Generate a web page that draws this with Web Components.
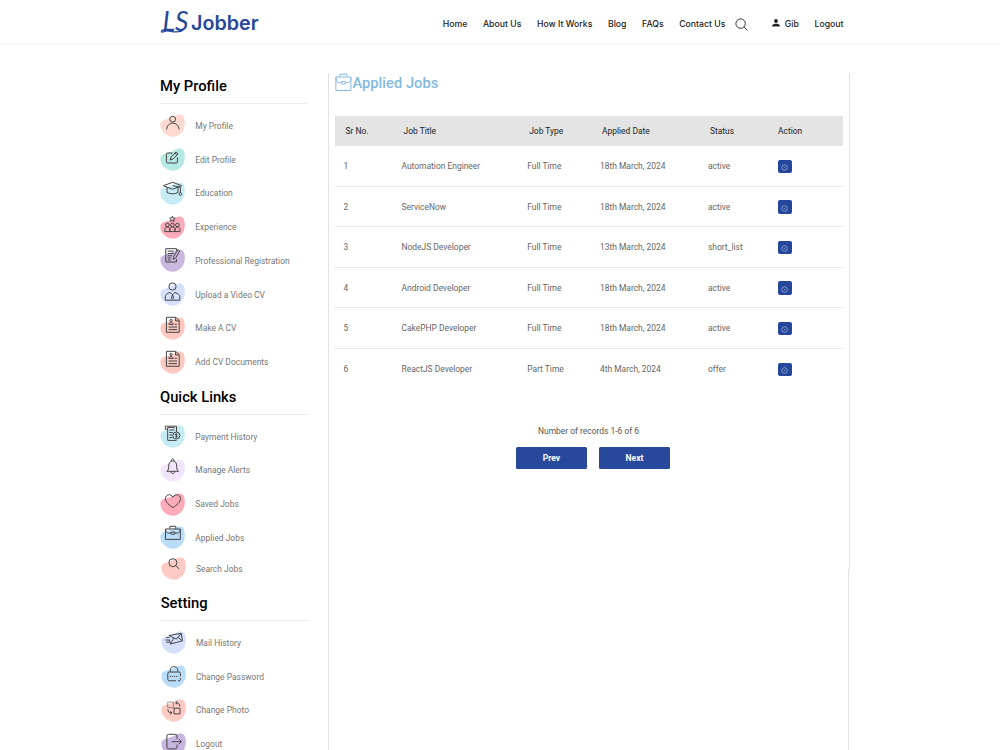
<!DOCTYPE html>
<html lang="en">
<head>
<meta charset="utf-8">
<title>Applied Jobs - Jobber</title>
<style>
  body {
    margin: 0;
    height: 750px;
    overflow: hidden;
    background: #fff;
    font-family: Roboto, "Liberation Sans", sans-serif;
  }
</style>
</head>
<body>
<jobber-app></jobber-app>
<script>
const ICONS = {
  user: `<circle cx="12.7" cy="5.2" r="2.9"/><path d="M6.7 15.4c0-3.6 2.6-6.2 6-6.2s6.3 2.6 6.3 6.2"/>`,
  edit: `<path d="M12.5 5H7.6Q6.4 5 6.4 6.2v7.6Q6.4 15 7.6 15h8.6q1.2 0 1.2-1.2V9.5"/><path d="m10.3 12 .7-3 5-5 2.1 2-5 5zM14.8 5.2l2.1 2"/>`,
  education: `<path d="m3.4 3.7 9.3-3.4 8.9 3.4-8.9 3.6z"/><path d="M7 5.2v5.2c3 1.9 8.2 1.9 11 0V5.2M12.7 3.7l7.7 1.5v5"/><path d="m20.4 10-1.6 2 1.6 1.8 1.4-1.8z"/>`,
  experience: `<path d="m12.4.2.8 1.8 2 .2-1.5 1.3.4 1.9-1.7-1-1.7 1 .4-1.9-1.5-1.3 2-.2z"/>
    <circle cx="7.4" cy="9" r="1.8"/><circle cx="12.4" cy="9" r="1.8"/><circle cx="17.4" cy="9" r="1.8"/>
    <path d="M4.8 15.6v-1.8c0-1.9 1-2.7 2.5-2.7s2.5.8 2.5 2.7v1.8zM9.8 15.6v-1.8c0-1.9 1-2.7 2.6-2.7s2.5.8 2.5 2.7v1.8zM15 15.6v-1.8c0-1.9 1-2.7 2.5-2.7s2.5.8 2.5 2.7v1.8z"/>`,
  registration: `<path d="M16.4 10v3H5.8V-.3h10.8v2"/><path d="M7.7 2.2h6M7.7 4.5h6M7.7 6.8h4.5M7.7 9h3.5M7.7 11h3"/><path d="m13.2 10.4.5-2.8 4-6.7 2 1.2-4 6.7z"/>`,
  upload: `<circle cx="12.5" cy="3.5" r="3.6"/><path d="M5.3 17.2v-3.4c0-2 1.6-3.2 4.6-4.4l2.6 2.3 2.5-2.3c3.2 1.2 4.8 2.4 4.8 4.4v3.4zM12.5 11.7l-1.1 3.2 1.1 1.4 1.1-1.4z"/>`,
  cv: `<path d="M6.4.3h9.4l3.4 3.4v11.6H6.4zM15.6.3v3.6h3.6"/><circle cx="11" cy="3.4" r="1.1"/><path d="M8.9 7.4c0-2.5 4.2-2.5 4.2 0zM14.6 7.3h2.2M8.6 10h8.4M8.6 12.6h8.4"/>`,
  payment: `<path d="M16.5 7V1.2H5.3v3h2.4v11.2h8.9M7.7 4.2V2.6h7"/><path d="M9.4 5h5M9.4 7.5h3.4M9.4 10h3M9.4 12.5h3"/><circle cx="16.3" cy="10.5" r="3.5"/><path d="M17.4 9.2c-2.4-.9-2.8.9-1 1.3s1.2 2-1 1.2M16.3 8.3v4.6"/>`,
  bell: `<path d="M6.8 12.3c1.7-1.4 1.9-2.6 1.9-5.3 0-3.2 1.5-5 4-5s4 1.8 4 5c0 2.7.2 3.9 1.9 5.3zM11.4 2c-.4-2.8 3-2.8 2.6 0M10.9 12.5c.2 2.8 3.5 2.8 3.7 0"/>`,
  heart: `<path d="M12.9 14.6C9.2 12.2 5.4 9 5.4 5.6c0-4.2 5.4-5.3 7.5-1.4 2.2-3.9 7.6-2.8 7.6 1.4 0 3.4-3.8 6.6-7.6 9z"/>`,
  briefcase: `<path d="M5.5 3h14.8v10.4H5.5zM9.8 2.8V.3h6v2.5M5.5 3.2c.5 3.4 1.6 4 5.2 4M20.3 3.2c-.4 3.4-1.5 4-5.2 4M10.8 6.2h4.2v1.5q-2.1 1.6-4.2 0z"/>`,
  search: `<circle cx="11.9" cy="5.7" r="4"/><path d="m14.8 8.6 3.4 3.4"/>`,
  mail: `<path d="m7.8 4.5 12.4-2.2 1.2 7.5-12 3.3-1-4.4M8 4.6l7.5 3.5 4.6-5.6M9.5 12.9l3.2-5.8M21.1 9.7l-4-3.3M5.3 6.5h3M4.3 9h4.2M5.2 11.2h3"/>`,
  lock: `<path d="M15 15.8H8.3q-1.5 0-1.5-1.5V8.5Q6.8 7 8.3 7h9.6q1.5 0 1.5 1.5v2.8M19.4 13.3v1q0 1.5-1.5 1.5h-1"/><path d="M9.2 6.9V5.3c0-4.9 7.6-4.9 7.6 0v1.6"/><path stroke-dasharray="1.2 .9" d="M8.8 11.4h8.7"/>`,
  photo: `<path stroke-width=".5" d="M6.7 3h5.7v5.7H6.7z"/><path d="M13 9.2h6v5.7h-6zM18.8 7.5c0-2.6-1.2-3.8-4-3.8M16.3 2.1l-1.7 1.6 1.7 1.7M6.9 10.3c0 2.5 1 3.6 3.9 3.6M9.3 12.2l1.7 1.7-1.7 1.6"/>`,
  logout: `<path d="M16 5.7V3q0-1.7-1.7-1.7H7.6Q5.9 1.3 5.9 3v11.2q0 1.7 1.7 1.7h6.7q1.7 0 1.7-1.7v-2.5M10.7 8.7h9.7M17.8 6.1l2.6 2.6-2.6 2.6"/>`
};

const SECTIONS = [
  { title: "My Profile", items: [
    ["user", "#fdd9d0", "My Profile"],
    ["edit", "#b5e9e3", "Edit Profile"],
    ["education", "#c5ebf5", "Education"],
    ["experience", "#fbaaba", "Experience"],
    ["registration", "#cbb8e1", "Professional Registration"],
    ["upload", "#d5e0fc", "Upload a Video CV"],
    ["cv", "#fdc8bf", "Make A CV"],
    ["cv", "#fdc8bf", "Add CV Documents"]
  ] },
  { title: "Quick Links", items: [
    ["payment", "#c5ebf5", "Payment History"],
    ["bell", "#f2e5fb", "Manage Alerts"],
    ["heart", "#fbaaba", "Saved Jobs"],
    ["briefcase", "#b9dcf9", "Applied Jobs"],
    ["search", "#fdcbc3", "Search Jobs"]
  ] },
  { title: "Setting", items: [
    ["mail", "#d5e0fc", "Mail History"],
    ["lock", "#b9dcf9", "Change Password"],
    ["photo", "#fdcbc3", "Change Photo"],
    ["logout", "#c8b5df", "Logout"]
  ] }
];

const JOBS = [
  ["1", "Automation Engineer", "Full Time", "18th March, 2024", "active"],
  ["2", "ServiceNow", "Full Time", "18th March, 2024", "active"],
  ["3", "NodeJS Developer", "Full Time", "13th March, 2024", "short_list"],
  ["4", "Android Developer", "Full Time", "18th March, 2024", "active"],
  ["5", "CakePHP Developer", "Full Time", "18th March, 2024", "active"],
  ["6", "ReactJS Developer", "Part Time", "4th March, 2024", "offer"]
];

class JobberLogo extends HTMLElement {
  constructor() {
    super();
    this.attachShadow({ mode: "open" });
  }

  static get styles() {
    return /* css */`
      :host {
        display: block;
        width: 100px;
        height: 30px;
      }

      svg {
        display: block;
        overflow: visible;
        fill: #25479b;
      }

      .mark {
        font: italic 27px Lato, sans-serif;
      }

      .name {
        font: 600 19.5px Inter, sans-serif;
      }

      .swoosh {
        fill: none;
        stroke: #25479b;
        stroke-width: 1.4;
        stroke-linecap: round;
      }
    `;
  }

  connectedCallback() {
    this.shadowRoot.innerHTML = /* html */`
    <style>${JobberLogo.styles}</style>
    <svg width="100" height="30" viewBox="0 0 100 30">
      <text class="mark" x="2.5" y="23.7" textLength="26" lengthAdjust="spacingAndGlyphs">LS</text>
      <path class="swoosh" d="M6 23c-2.5-.6-5 .6-4.500 1.800.8 1 3.500-.8 5-1 4.500-.2 8.500 2.700 15.500 0"/>
      <text class="name" x="31" y="22.5" textLength="67.5" lengthAdjust="spacingAndGlyphs">Jobber</text>
    </svg>`;
  }
}

class JobberHeader extends HTMLElement {
  constructor() {
    super();
    this.attachShadow({ mode: "open" });
  }

  static get styles() {
    return /* css */`
      :host {
        display: flex;
        box-sizing: border-box;
        height: 45px;
        padding: 7px 156.5px 0 160px;
        border-bottom: 2px solid #f7f7f7;
        justify-content: space-between;
      }

      nav {
        display: flex;
        height: 33px;
        align-items: center;
        font: 500 8.7px Inter, sans-serif;
        color: #222;
      }

      a {
        white-space: nowrap;
        margin-right: 15.6px;
      }

      a:last-child {
        margin-right: 0;
      }

      .contact {
        margin-right: 9.5px;
      }

      svg {
        fill: none;
        stroke: #333;
      }

      .find {
        margin: 1px 24px 0 0;
      }

      .person {
        margin: -2px 5px 0 0;
        fill: #222;
        stroke: none;
      }
    `;
  }

  connectedCallback() {
    this.shadowRoot.innerHTML = /* html */`
    <style>${JobberHeader.styles}</style>
    <jobber-logo></jobber-logo>
    <nav>
      <a>Home</a>
      <a>About Us</a>
      <a>How It Works</a>
      <a>Blog</a>
      <a>FAQs</a>
      <a class="contact">Contact Us</a>
      <svg class="find" width="13" height="13" viewBox="0 0 13 13"><circle cx="5.6" cy="5.6" r="4.7"/><path d="m9 9 3.5 3.3"/></svg>
      <svg class="person" width="8" height="8" viewBox="0 0 8 8"><circle cx="4" cy="2" r="1.9"/><path d="M.3 7.5V6.3C.5 4.2 7.5 4.2 7.7 6.3v1.2z"/></svg>
      <a>Gib</a>
      <a>Logout</a>
    </nav>`;
  }
}

class JobberMenuItem extends HTMLElement {
  constructor() {
    super();
    this.attachShadow({ mode: "open" });
  }

  static get styles() {
    return /* css */`
      :host {
        display: flex;
        height: 33.75px;
        align-items: center;
        gap: 10.3px;
        font-size: 8.45px;
        color: #777;
      }

      svg {
        flex: none;
        overflow: visible;
        fill: none;
        stroke: #444;
        stroke-width: 1;
        stroke-linejoin: round;
      }
    `;
  }

  connectedCallback() {
    this.shadowRoot.innerHTML = /* html */`
    <style>${JobberMenuItem.styles}</style>
    <svg width="25" height="23" viewBox="0 0 25 23">
      <path fill="${this.getAttribute("tint")}" stroke="none" d="M.4 10.6C.7 6.5 4 6.2 9 4.6 13.5 3.2 15.5.4 20 .4c4 0 5 5 4.8 9.6-.3 7-5.3 12.7-12.3 12.7C6 22.7.1 16.5.4 10.6z"/>
      ${ICONS[this.getAttribute("icon")]}
    </svg>
    <slot></slot>`;
  }
}

class JobberMenu extends HTMLElement {
  constructor() {
    super();
    this.attachShadow({ mode: "open" });
  }

  static get styles() {
    return /* css */`
      :host {
        display: block;
      }

      h2 {
        margin: 0 0 5px;
        height: 34px;
        line-height: 34.6px;
        border-bottom: 1px solid #ececec;
        font-size: 14.75px;
        font-weight: 500;
        color: #000;
      }
    `;
  }

  connectedCallback() {
    this.shadowRoot.innerHTML = /* html */`
    <style>${JobberMenu.styles}</style>
    <h2>${this.getAttribute("heading")}</h2>
    <slot></slot>`;
  }
}

class JobberTable extends HTMLElement {
  constructor() {
    super();
    this.attachShadow({ mode: "open" });
  }

  static get styles() {
    return /* css */`
      :host {
        display: block;
        font-size: 8.45px;
        color: #666;
      }

      .row {
        display: grid;
        grid-template-columns: 58px 125.7px 72.8px 108px 70px 1fr;
        box-sizing: border-box;
        height: 40.5px;
        padding-left: 8.5px;
        align-items: center;
        border-bottom: 1px solid #e9e9e9;
      }

      .row:last-child {
        border-bottom: 0;
      }

      .head {
        height: 30px;
        background: #e4e4e4;
        border-bottom: 0;
        color: #222;
      }

      .head span:not(:last-child) {
        padding-left: 2px;
      }

      button {
        display: flex;
        width: 14px;
        height: 13.5px;
        margin-top: 1px;
        padding: 0;
        border: 0;
        border-radius: 2px;
        background: #25479b;
        align-items: center;
        justify-content: center;
      }

      svg {
        margin-top: 2px;
        fill: none;
        stroke: #a9b9df;
        stroke-width: .7;
      }
    `;
  }

  connectedCallback() {
    const titles = ["Sr No.", "Job Title", "Job Type", "Applied Date", "Status", "Action"];
    const view = `<button><svg width="7" height="7" viewBox="0 0 7 7"><circle cx="3.5" cy="3.5" r="2.8"/><circle cx="3.5" cy="3.5" r=".3"/></svg></button>`;
    this.shadowRoot.innerHTML = /* html */`
    <style>${JobberTable.styles}</style>
    <div class="row head">${titles.map(t => `<span>${t}</span>`).join("")}</div>
    ${JOBS.map(job => `<div class="row">${job.map(c => `<span>${c}</span>`).join("")}${view}</div>`).join("")}`;
  }
}

class JobberPager extends HTMLElement {
  constructor() {
    super();
    this.attachShadow({ mode: "open" });
  }

  static get styles() {
    return /* css */`
      :host {
        display: flex;
        flex-direction: column;
        align-items: center;
        margin-right: -7px;
        padding-top: 36px;
        font-size: 8.45px;
        color: #555;
      }

      p {
        margin: 0 8px 10px 0;
        line-height: 12px;
      }

      .buttons {
        display: flex;
        gap: 12px;
        margin-right: -1px;
      }

      button {
        width: 71px;
        height: 22px;
        padding: 0;
        border: 0;
        border-radius: 1.5px;
        background: #27489b;
        color: #fff;
        font: bold 8.5px Roboto, sans-serif;
      }
    `;
  }

  connectedCallback() {
    this.shadowRoot.innerHTML = /* html */`
    <style>${JobberPager.styles}</style>
    <p>Number of records 1-6 of 6</p>
    <div class="buttons">
      <button>Prev</button>
      <button>Next</button>
    </div>`;
  }
}

class JobberApp extends HTMLElement {
  constructor() {
    super();
    this.attachShadow({ mode: "open" });
  }

  static get styles() {
    return /* css */`
      :host {
        display: block;
      }

      .page {
        display: flex;
        width: 690px;
        height: 705px;
        margin-left: 160px;
        overflow: hidden;
      }

      aside {
        width: 148px;
        margin-right: 20px;
        padding-top: 24px;
      }

      jobber-menu:nth-child(2) {
        margin-top: .8px;
      }

      jobber-menu:nth-child(3) {
        margin-top: 3.5px;
        padding-left: .7px;
      }

      .shift {
        height: 27.75px;
        padding-left: .7px;
      }

      main {
        flex: 1;
        display: flex;
        flex-direction: column;
        margin-top: 27.5px;
      }

      .panel {
        box-sizing: border-box;
        height: 496px;
        padding: 0 6px;
        border: solid #e2e2e2;
        border-width: 0 1px;
      }

      .rest {
        flex: 1;
        margin-right: 1px;
        border: solid #e2e2e2;
        border-width: 0 1px;
      }

      h1 {
        display: flex;
        height: 20px;
        margin: 0 0 23.9px;
        align-items: center;
        gap: .5px;
        font-size: 14.7px;
        font-weight: 500;
        color: #84b9df;
      }

      h1 svg {
        margin-top: -1px;
        fill: none;
        stroke: #84b9df;
      }
    `;
  }

  connectedCallback() {
    this.shadowRoot.innerHTML = /* html */`
    <style>${JobberApp.styles}</style>
    <jobber-header></jobber-header>
    <div class="page">
      <aside>
        ${SECTIONS.map(s => `<jobber-menu heading="${s.title}">
          ${s.items.map(([icon, tint, label]) => `<jobber-menu-item icon="${icon}" tint="${tint}"${icon === "search" ? ` class="shift"` : ""}>${label}</jobber-menu-item>`).join("")}
        </jobber-menu>`).join("")}
      </aside>
      <main>
        <div class="panel">
          <h1>
            <svg width="17" height="19" viewBox="0 0 17 19"><path d="M.9 4h15v13.5H.9zM5 3.8V1.2h7v2.6M1 4.5c.3 4.5 1.5 5.3 5.5 5.3M16 4.5c-.3 4.5-1.5 5.3-5.5 5.3M6.5 8.5h4v2q-2 1.3-4 0z"/></svg>
            Applied Jobs
          </h1>
          <jobber-table></jobber-table>
          <jobber-pager></jobber-pager>
        </div>
        <div class="rest"></div>
      </main>
    </div>`;
  }
}

customElements.define("jobber-logo", JobberLogo);
customElements.define("jobber-header", JobberHeader);
customElements.define("jobber-menu-item", JobberMenuItem);
customElements.define("jobber-menu", JobberMenu);
customElements.define("jobber-table", JobberTable);
customElements.define("jobber-pager", JobberPager);
customElements.define("jobber-app", JobberApp);
</script>
</body>
</html>
